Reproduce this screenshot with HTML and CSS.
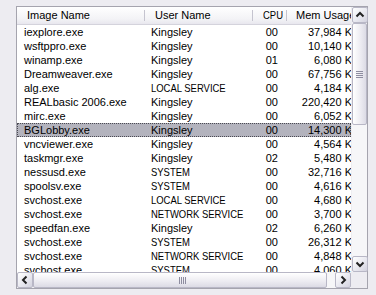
FILE: index.html
```html
<!DOCTYPE html>
<html lang="en">
<head>
    <meta charset="UTF-8">
    <title>Processes</title>
    <link rel="stylesheet" href="styles.css">
</head>
<body>

    <div class="listbox">
        <div class="view">
            <div class="header">
                <div class="hcell c-name">Image Name</div>
                <div class="hcell c-user">User Name</div>
                <div class="hcell c-cpu"><span class="caps">CPU</span></div>
                <div class="hcell c-mem">Mem Usage</div>
            </div>
            <div class="rows">
                <div class="row"><span class="c-name">iexplore.exe</span><span class="c-user">Kingsley</span><span class="c-cpu">00</span><span class="c-mem">37,984 K</span></div>
                <div class="row"><span class="c-name">wsftppro.exe</span><span class="c-user">Kingsley</span><span class="c-cpu">00</span><span class="c-mem">10,140 K</span></div>
                <div class="row"><span class="c-name">winamp.exe</span><span class="c-user">Kingsley</span><span class="c-cpu">01</span><span class="c-mem">6,080 K</span></div>
                <div class="row"><span class="c-name">Dreamweaver.exe</span><span class="c-user">Kingsley</span><span class="c-cpu">00</span><span class="c-mem">67,756 K</span></div>
                <div class="row"><span class="c-name">alg.exe</span><span class="c-user"><span class="caps">LOCAL SERVICE</span></span><span class="c-cpu">00</span><span class="c-mem">4,184 K</span></div>
                <div class="row"><span class="c-name">REALbasic 2006.exe</span><span class="c-user">Kingsley</span><span class="c-cpu">00</span><span class="c-mem">220,420 K</span></div>
                <div class="row"><span class="c-name">mirc.exe</span><span class="c-user">Kingsley</span><span class="c-cpu">00</span><span class="c-mem">6,052 K</span></div>
                <div class="row selected"><span class="c-name">BGLobby.exe</span><span class="c-user">Kingsley</span><span class="c-cpu">00</span><span class="c-mem">14,300 K</span></div>
                <div class="row"><span class="c-name">vncviewer.exe</span><span class="c-user">Kingsley</span><span class="c-cpu">00</span><span class="c-mem">4,564 K</span></div>
                <div class="row"><span class="c-name">taskmgr.exe</span><span class="c-user">Kingsley</span><span class="c-cpu">02</span><span class="c-mem">5,480 K</span></div>
                <div class="row"><span class="c-name">nessusd.exe</span><span class="c-user"><span class="caps">SYSTEM</span></span><span class="c-cpu">00</span><span class="c-mem">32,716 K</span></div>
                <div class="row"><span class="c-name">spoolsv.exe</span><span class="c-user"><span class="caps">SYSTEM</span></span><span class="c-cpu">00</span><span class="c-mem">4,616 K</span></div>
                <div class="row"><span class="c-name">svchost.exe</span><span class="c-user"><span class="caps">LOCAL SERVICE</span></span><span class="c-cpu">00</span><span class="c-mem">4,680 K</span></div>
                <div class="row"><span class="c-name">svchost.exe</span><span class="c-user"><span class="caps">NETWORK SERVICE</span></span><span class="c-cpu">00</span><span class="c-mem">3,700 K</span></div>
                <div class="row"><span class="c-name">speedfan.exe</span><span class="c-user">Kingsley</span><span class="c-cpu">02</span><span class="c-mem">6,260 K</span></div>
                <div class="row"><span class="c-name">svchost.exe</span><span class="c-user"><span class="caps">SYSTEM</span></span><span class="c-cpu">00</span><span class="c-mem">26,312 K</span></div>
                <div class="row"><span class="c-name">svchost.exe</span><span class="c-user"><span class="caps">NETWORK SERVICE</span></span><span class="c-cpu">00</span><span class="c-mem">4,848 K</span></div>
                <div class="row"><span class="c-name">svchost.exe</span><span class="c-user"><span class="caps">SYSTEM</span></span><span class="c-cpu">00</span><span class="c-mem">4,060 K</span></div>
            </div>
        </div>

        <div class="vscroll">
            <div class="sbtn">
                <svg width="14" height="14" viewBox="0 0 14 14"><polyline points="3.5,8.5 7,5 10.5,8.5" fill="none" stroke="#222" stroke-width="2"/></svg>
            </div>
            <div class="vtrack">
                <div class="vthumb"><span class="grip-h"></span></div>
            </div>
            <div class="sbtn">
                <svg width="14" height="14" viewBox="0 0 14 14"><polyline points="3.5,5.5 7,9 10.5,5.5" fill="none" stroke="#222" stroke-width="2"/></svg>
            </div>
        </div>

        <div class="hscroll">
            <div class="sbtn">
                <svg width="14" height="14" viewBox="0 0 14 14"><polyline points="8.5,3.5 5,7 8.5,10.5" fill="none" stroke="#222" stroke-width="2"/></svg>
            </div>
            <div class="htrack">
                <div class="hthumb"><span class="grip-v"></span></div>
            </div>
            <div class="sbtn">
                <svg width="14" height="14" viewBox="0 0 14 14"><polyline points="5.5,3.5 9,7 5.5,10.5" fill="none" stroke="#222" stroke-width="2"/></svg>
            </div>
        </div>

        <div class="corner"></div>
    </div>

</body>
</html>
```

FILE: styles.css
```css
body {
    margin: 0;
    padding: 6px 0 0 16px;
    background: #edecf1;
    font-family: 'Liberation Sans', Arial, sans-serif;
    font-size: 11px;
    color: #000;
}

/* list view frame */
.listbox {
    width: 350px;
    height: 281px;
    border: 1px solid #a5a4ae;
    background: #fff;
    display: grid;
    grid-template-columns: 334px 16px;
    grid-template-rows: 265px 16px;
}

.view {
    overflow: hidden;
}

.header,
.row {
    display: flex;
    white-space: nowrap;
}

.header {
    height: 17px;
    border-bottom: 1px solid #d4d3dc;
    background: linear-gradient(#ffffff, #f3f3f6 70%, #e8e7ee);
}

.hcell {
    position: relative;
    line-height: 17px;
    overflow: hidden;
}

.hcell::after {
    content: "";
    position: absolute;
    right: 0;
    top: 3px;
    bottom: 3px;
    width: 1px;
    background: #c5c4cf;
}

.row {
    height: 14px;
    line-height: 14px;
}

.row > span {
    overflow: hidden;
}

/* all-caps words are narrow in the original system font */
.caps {
    display: inline-block;
    transform: scaleX(0.86);
    transform-origin: left center;
}

.c-name, .c-user, .c-cpu, .c-mem {
    flex-shrink: 0;
    box-sizing: border-box;
}

.c-name { width: 128px; padding-left: 7px; }
.c-user { width: 108px; padding-left: 6px; }
.c-cpu  { width: 34px;  padding-right: 9px; text-align: right; }
.c-mem  { width: 72px;  padding-right: 7px; text-align: right; }

.hcell.c-name,
.hcell.c-user,
.hcell.c-cpu { padding: 0 0 0 10px; text-align: left; }
.hcell.c-mem { padding: 0 0 0 9px; text-align: left; }

.row.selected {
    background: #b3b3bd;
    outline: 1px dotted #4a4a52;
    outline-offset: -1px;
}

/* scrollbars */
.vscroll,
.hscroll {
    display: flex;
    background: #f6f6f8;
}

.vscroll {
    flex-direction: column;
    border-left: 1px solid #eeeef2;
}

.sbtn {
    width: 16px;
    height: 16px;
    flex-shrink: 0;
    box-sizing: border-box;
    border: 1px solid #b8b7c6;
    border-radius: 2px;
    background: linear-gradient(135deg, #ffffff, #e6e6ee 60%, #d3d2de);
    display: flex;
    align-items: center;
    justify-content: center;
}

.vtrack,
.htrack {
    flex: 1;
    display: flex;
}

.vtrack {
    flex-direction: column;
}

.vthumb {
    height: 100px;
    border: 1px solid #b8b7c6;
    border-radius: 2px;
    background: linear-gradient(90deg, #ffffff, #ecebf1 60%, #dcdbe5);
    display: flex;
    align-items: center;
    justify-content: center;
}

.grip-h {
    width: 7px;
    height: 7px;
    background: repeating-linear-gradient(#8e8da0 0 1px, transparent 1px 2px);
}

.htrack {
    padding-right: 8px;
}

.hthumb {
    flex: 1;
    border: 1px solid #b8b7c6;
    border-radius: 2px;
    background: linear-gradient(#ffffff, #ecebf1 60%, #dcdbe5);
    display: flex;
    align-items: center;
    justify-content: center;
    padding-left: 5px;
}

.grip-v {
    width: 7px;
    height: 7px;
    background: repeating-linear-gradient(90deg, #8e8da0 0 1px, transparent 1px 2px);
}

.corner {
    background: #edecf1;
}
```
